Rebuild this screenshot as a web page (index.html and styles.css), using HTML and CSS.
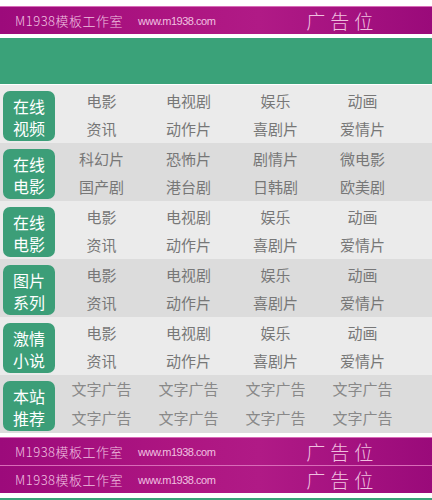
FILE: index.html
```html
<!DOCTYPE html>
<html lang="zh-CN">
<head>
    <meta charset="UTF-8">
    <meta name="viewport" content="width=device-width, initial-scale=1.0">
    <title>M1938模板工作室</title>
    <link rel="stylesheet" href="styles.css">
</head>
<body>
    <div class="ad-bar top">
        <span class="ad-name">M1938模板工作室</span>
        <span class="ad-url">www.m1938.com</span>
        <span class="ad-slot">广告位</span>
    </div>

    <div class="banner"></div>

    <div class="nav">
        <div class="nav-row">
            <div class="nav-tag"><span>在线</span><span>视频</span></div>
            <ul class="nav-links">
                <li>电影</li><li>电视剧</li><li>娱乐</li><li>动画</li>
                <li>资讯</li><li>动作片</li><li>喜剧片</li><li>爱情片</li>
            </ul>
        </div>
        <div class="nav-row">
            <div class="nav-tag"><span>在线</span><span>电影</span></div>
            <ul class="nav-links">
                <li>科幻片</li><li>恐怖片</li><li>剧情片</li><li>微电影</li>
                <li>国产剧</li><li>港台剧</li><li>日韩剧</li><li>欧美剧</li>
            </ul>
        </div>
        <div class="nav-row">
            <div class="nav-tag"><span>在线</span><span>电影</span></div>
            <ul class="nav-links">
                <li>电影</li><li>电视剧</li><li>娱乐</li><li>动画</li>
                <li>资讯</li><li>动作片</li><li>喜剧片</li><li>爱情片</li>
            </ul>
        </div>
        <div class="nav-row">
            <div class="nav-tag"><span>图片</span><span>系列</span></div>
            <ul class="nav-links">
                <li>电影</li><li>电视剧</li><li>娱乐</li><li>动画</li>
                <li>资讯</li><li>动作片</li><li>喜剧片</li><li>爱情片</li>
            </ul>
        </div>
        <div class="nav-row">
            <div class="nav-tag"><span>激情</span><span>小说</span></div>
            <ul class="nav-links">
                <li>电影</li><li>电视剧</li><li>娱乐</li><li>动画</li>
                <li>资讯</li><li>动作片</li><li>喜剧片</li><li>爱情片</li>
            </ul>
        </div>
        <div class="nav-row">
            <div class="nav-tag"><span>本站</span><span>推荐</span></div>
            <ul class="nav-links text-ads">
                <li>文字广告</li><li>文字广告</li><li>文字广告</li><li>文字广告</li>
                <li>文字广告</li><li>文字广告</li><li>文字广告</li><li>文字广告</li>
            </ul>
        </div>
    </div>

    <div class="ad-bar bottom">
        <span class="ad-name">M1938模板工作室</span>
        <span class="ad-url">www.m1938.com</span>
        <span class="ad-slot">广告位</span>
    </div>
    <div class="ad-bar">
        <span class="ad-name">M1938模板工作室</span>
        <span class="ad-url">www.m1938.com</span>
        <span class="ad-slot">广告位</span>
    </div>

    <div class="footer-strip"></div>
</body>
</html>
```

FILE: styles.css
```css
body {
    margin: 0;
    background: #fff;
    font-family: "Noto Sans CJK SC", "Liberation Sans", sans-serif;
}
ul {
    margin: 0;
    padding: 0;
    list-style: none;
}

/* magenta ad strips */
.ad-bar {
    display: flex;
    align-items: center;
    height: 27px;
    border-top: 1px solid #d86cb8;
    background: linear-gradient(90deg, #9c0a7b 0%, #ad1581 40%, #b01a86 60%, #9a0a7a 100%);
    color: #f0c0e0;
    white-space: nowrap;
}
.ad-bar.top {
    margin-top: 6px;
}
.ad-bar.bottom {
    margin-top: 4px;
}
.ad-name {
    margin-left: 15px;
    font-size: 13px;
    font-weight: 300;
    letter-spacing: 0.5px;
}
.ad-url {
    margin-left: 15px;
    font-family: "Liberation Sans", sans-serif;
    font-size: 11px;
    letter-spacing: -0.5px;
}
.ad-slot {
    margin-left: 91px;
    font-size: 19px;
    font-weight: 300;
    letter-spacing: 5px;
}

.banner {
    margin-top: 4px;
    height: 46px;
    background: #3aa279;
}

/* category rows */
.nav {
    margin-top: 1px;
}
.nav-row {
    display: flex;
    height: 58px;
    background: #ebebeb;
}
.nav-row:nth-child(even) {
    background: #dcdcdc;
}
.nav-tag {
    display: flex;
    flex-direction: column;
    align-items: center;
    gap: 4px;
    box-sizing: border-box;
    width: 52px;
    height: 50px;
    margin: 6px 3px 0 3px;
    padding-top: 6px;
    border-radius: 7px;
    background: #3c9e78;
    color: #fff;
    font-size: 16px;
    line-height: 18px;
}
.nav-links {
    display: grid;
    grid-template-columns: repeat(4, 87px);
    padding-top: 3px;
}
.nav-links li {
    color: #777;
    font-size: 15px;
    line-height: 25px;
    text-align: center;
}
.nav-links.text-ads {
    padding-top: 1px;
}
.text-ads li {
    color: #888;
}

.footer-strip {
    margin-top: 5px;
    height: 10px;
    background: #3aa279;
}
```
